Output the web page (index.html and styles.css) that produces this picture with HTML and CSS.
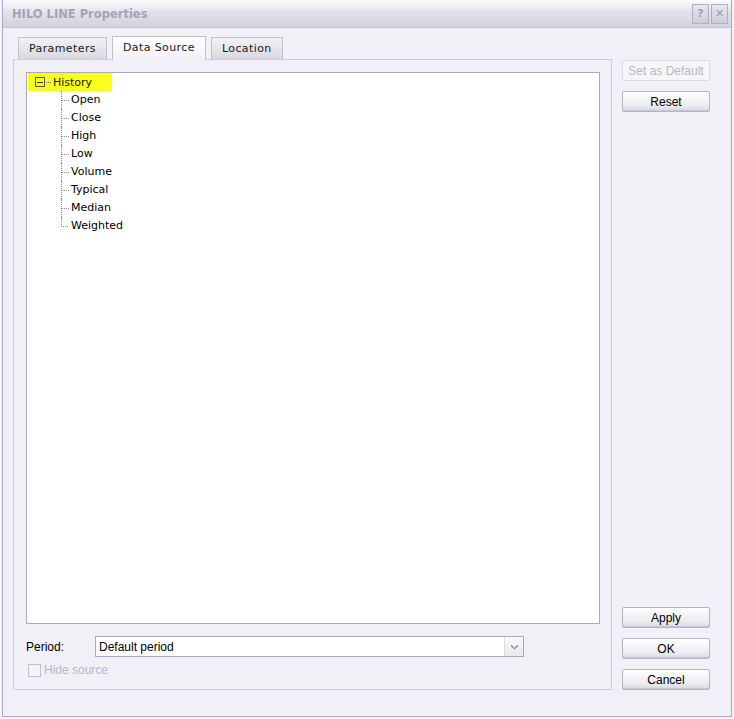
FILE: index.html
```html
<!DOCTYPE html>
<html lang="en">
<head>
  <meta charset="UTF-8" />
  <title>HILO LINE Properties</title>
  <link rel="stylesheet" href="styles.css">
</head>
<body>

  <div class="window">
    <div class="titlebar">
      <span class="title">HILO LINE Properties</span>
      <div class="caption-buttons">
        <span class="cap-btn">?</span>
        <span class="cap-btn">&#x2715;</span>
      </div>
    </div>

    <div class="content">
      <div class="left">
        <div class="tabs">
          <div class="tab">Parameters</div>
          <div class="tab active">Data Source</div>
          <div class="tab">Location</div>
        </div>

        <div class="panel">
          <div class="tree">
            <div class="root">
              <span class="expander"></span>
              <span class="root-dots"></span>
              <span class="root-label">History</span>
            </div>
            <ul class="children">
              <li>Open</li>
              <li>Close</li>
              <li>High</li>
              <li>Low</li>
              <li>Volume</li>
              <li>Typical</li>
              <li>Median</li>
              <li>Weighted</li>
            </ul>
          </div>

          <div class="period-row">
            <label class="period-label">Period:</label>
            <div class="combo">
              <span class="combo-text">Default period</span>
              <span class="combo-arrow">
                <svg width="9" height="6" viewBox="0 0 9 6"><path d="M1 1 L4.5 4 L8 1 M1 2 L4.5 5 L8 2" stroke="#8a8aa8" stroke-width="1" fill="none"/></svg>
              </span>
            </div>
          </div>

          <div class="hide-row">
            <span class="checkbox"></span>
            <span class="hide-label">Hide source</span>
          </div>
        </div>
      </div>

      <div class="right">
        <div class="btn-group">
          <button class="btn disabled">Set as Default</button>
          <button class="btn">Reset</button>
        </div>
        <div class="btn-group">
          <button class="btn">Apply</button>
          <button class="btn">OK</button>
          <button class="btn">Cancel</button>
        </div>
      </div>
    </div>
  </div>

</body>
</html>
```

FILE: styles.css
```css
:root {
  --dlg-bg: #f1f0f7;
  --frame: #a9a9c4;
  --panel-border: #cfcfdb;
  --text: #000;
  --disabled: #b8b8c4;
}

body {
  margin: 0;
  background: #f4f4f8;
  font-family: "DejaVu Sans", sans-serif;
  font-size: 11px;
  color: var(--text);
}

.window {
  margin: 0 2px;
  width: 728px;
  height: 716px;
  border: 1px solid var(--frame);
  border-top: none;
  background: var(--dlg-bg);
  display: flex;
  flex-direction: column;
}

.titlebar {
  height: 27px;
  display: flex;
  align-items: center;
  justify-content: space-between;
  padding: 0 3px 0 9px;
  background: linear-gradient(#fbfbfd, #e2e2ec 45%, #d2d2e0);
  border-bottom: 1px solid #c4c4d4;
}

.title {
  font-weight: bold;
  font-size: 11.5px;
  color: #a4a4b4;
  font-family: "DejaVu Sans", sans-serif;
}

.caption-buttons {
  display: flex;
  gap: 2px;
}

.cap-btn {
  width: 15px;
  height: 18px;
  border: 1px solid #b0b0c4;
  background: linear-gradient(#e6e6ee, #cdcdda);
  color: #9c9cb0;
  font-weight: bold;
  font-size: 11px;
  display: flex;
  align-items: center;
  justify-content: center;
}

.content {
  flex: 1;
  display: flex;
  padding: 7px 0 0 10px;
}

.left {
  width: 599px;
  display: flex;
  flex-direction: column;
}

.tabs {
  display: flex;
  align-items: flex-end;
  padding-left: 5px;
  gap: 5px;
  height: 24px;
  position: relative;
  z-index: 1;
}

.tab {
  height: 21px;
  padding: 0 10px;
  display: flex;
  align-items: center;
  border: 1px solid #c2c2cc;
  border-bottom: none;
  background: linear-gradient(#f2f2f4, #d9d9df);
  color: #1a1a1a;
  letter-spacing: 0.4px;
}

.tab.active {
  height: 24px;
  background: linear-gradient(#ffffff, var(--dlg-bg));
  margin-bottom: -1px;
  padding-bottom: 2px;
  box-sizing: border-box;
}

.panel {
  height: 631px;
  box-sizing: border-box;
  border: 1px solid var(--panel-border);
  padding: 12px 11px 0 12px;
  display: flex;
  flex-direction: column;
}

.tree {
  height: 552px;
  box-sizing: border-box;
  border: 1px solid var(--frame);
  background: #fff;
  padding: 0 0 0 1px;
}

.root {
  display: flex;
  align-items: center;
  height: 18px;
  width: 84px;
  background: #f8ff1a;
  border-radius: 0 0 2px 0;
}

.expander {
  width: 10px;
  height: 10px;
  margin-left: 7px;
  border: 1px solid #5a5a3a;
  box-sizing: border-box;
  position: relative;
}

.expander::after {
  content: "";
  position: absolute;
  left: 1px;
  right: 1px;
  top: 4px;
  height: 1px;
  background: #303020;
}

.root-dots {
  width: 5px;
  height: 1px;
  border-top: 1px dotted #808060;
  margin: 1px 2px 0 1px;
}

.root-label {
  color: #202000;
}

.children {
  list-style: none;
  margin: 0 0 0 33px;
  padding: 0;
}

.children li {
  height: 18px;
  line-height: 18px;
  padding-left: 9px;
  position: relative;
  border-left: 1px dotted #8a8a8a;
}

.children li::before {
  content: "";
  position: absolute;
  left: 0;
  top: 9px;
  width: 7px;
  border-top: 1px dotted #8a8a8a;
}

.children li:last-child {
  border-left: none;
  padding-left: 10px;
}

.children li:last-child::after {
  content: "";
  position: absolute;
  left: 0;
  top: 0;
  height: 10px;
  border-left: 1px dotted #8a8a8a;
}

.period-row {
  display: flex;
  align-items: center;
  margin-top: 12px;
  height: 21px;
}

.period-label {
  width: 69px;
  font-family: "Liberation Sans", sans-serif;
  font-size: 12px;
}

.combo {
  width: 429px;
  height: 21px;
  box-sizing: border-box;
  border: 1px solid var(--frame);
  background: #fff;
  display: flex;
  align-items: center;
}

.combo-text {
  flex: 1;
  padding-left: 3px;
  font-family: "Liberation Sans", sans-serif;
  font-size: 12px;
}

.combo-arrow {
  width: 18px;
  height: 19px;
  border-left: 1px solid #dcdce6;
  background: linear-gradient(#fafafc, #e8e8ee);
  display: flex;
  align-items: center;
  justify-content: center;
}

.hide-row {
  display: flex;
  align-items: center;
  margin-top: 6px;
  padding-left: 2px;
  height: 14px;
}

.checkbox {
  width: 13px;
  height: 13px;
  box-sizing: border-box;
  border: 1px solid #c0c0d0;
  background: #f4f4f8;
  margin-right: 3px;
}

.hide-label {
  color: var(--disabled);
  font-family: "Liberation Sans", sans-serif;
  font-size: 12px;
}

.right {
  margin-left: 10px;
  width: 88px;
  display: flex;
  flex-direction: column;
  justify-content: space-between;
  padding: 25px 0 26px;
}

.btn-group {
  display: flex;
  flex-direction: column;
  gap: 10px;
}

.btn {
  width: 88px;
  height: 21px;
  border: 1px solid #b4b4c4;
  border-radius: 2px;
  background: linear-gradient(#ffffff, #ececf2 70%, #d8d8e2);
  font-family: "Liberation Sans", sans-serif;
  font-size: 12px;
  color: #000;
  padding: 0;
  box-shadow: inset 0 -1px 0 #c8c8d4;
}

.btn.disabled {
  color: var(--disabled);
  background: #f6f6f9;
  border-color: #dcdce4;
  box-shadow: none;
}
```
